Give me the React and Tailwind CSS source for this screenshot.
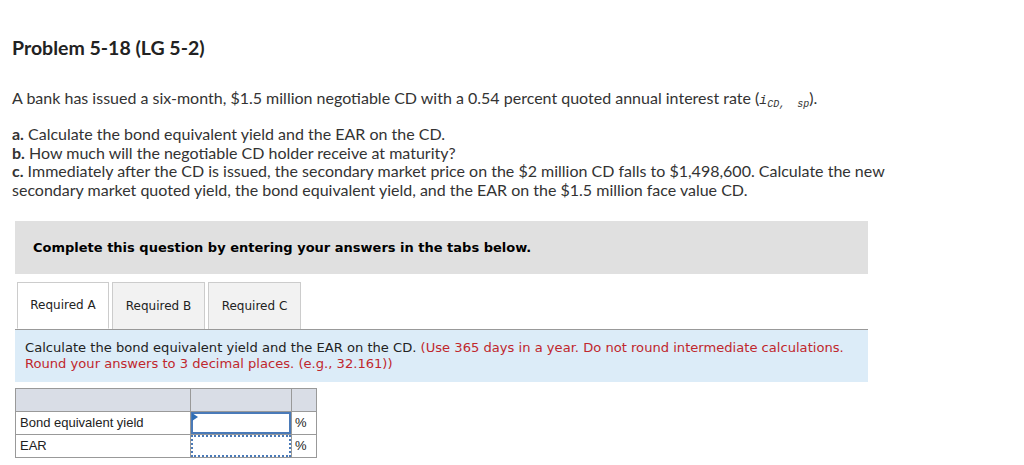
export default function App() {
  const proxima = { fontFamily: "Lato, 'Open Sans', sans-serif" };
  return (
    <div className="w-[1024px] h-[465px] bg-white overflow-hidden text-[#333]" style={proxima}>
      <div className="pl-[12px] pt-[36px]">
        <h1 className="text-[19.5px] font-bold text-[#222] leading-[24px]">Problem 5-18 (LG 5-2)</h1>
        <p className="mt-[28px] text-[16px] leading-[20px]">
          A bank has issued a six-month, $1.5 million negotiable CD with a 0.54 percent quoted annual interest rate (
          <span className="italic text-[13px] font-['Liberation_Mono',monospace]">i<sub className="text-[10px]">CD,&nbsp; sp</sub></span>).
        </p>
        <div className="mt-[14px] text-[16px] leading-[18.7px]">
          <div><b>a.</b> Calculate the bond equivalent yield and the EAR on the CD.</div>
          <div><b>b.</b> How much will the negotiable CD holder receive at maturity?</div>
          <div><b>c.</b> Immediately after the CD is issued, the secondary market price on the $2 million CD falls to $1,498,600. Calculate the new</div>
          <div>secondary market quoted yield, the bond equivalent yield, and the EAR on the $1.5 million face value CD.</div>
        </div>
      </div>
      <div className="ml-[15px] w-[853px] font-['DejaVu_Sans',Verdana,sans-serif]">
        <div className="mt-[21px] h-[53px] bg-[#e0e0e0] flex items-center pl-[18px] text-[13px] font-bold text-black">
          Complete this question by entering your answers in the tabs below.
        </div>
        <div className="mt-[8px] flex gap-[3px] pl-[2px] border-b border-[#999]">
          <div className="w-[92px] h-[47px] -mb-px bg-white border border-[#ccc] border-b-white flex items-center justify-center text-[12px] text-[#222]">Required A</div>
          <div className="w-[93px] h-[47px] bg-[#f2f2f2] border border-[#ccc] border-b-0 flex items-center justify-center text-[12px] text-[#222]">Required B</div>
          <div className="w-[93px] h-[47px] bg-[#f2f2f2] border border-[#ccc] border-b-0 flex items-center justify-center text-[12px] text-[#222]">Required C</div>
        </div>
        <div className="h-[52px] bg-[#dcecf8] pl-[10px] pt-[10px] text-[13.1px] leading-[16px] text-[#222]">
          Calculate the bond equivalent yield and the EAR on the CD. <span className="text-[#c0272d]">(Use 365 days in a year. Do not round intermediate calculations. Round your answers to 3 decimal places. (e.g., 32.161))</span>
        </div>
      </div>
      <table className="ml-[15px] mt-[6px] border-collapse font-['Liberation_Sans',Arial,sans-serif] text-[13px] text-[#222]">
        <tbody>
          <tr className="bg-[#d9dde6] h-[23px]">
            <td className="w-[175px] border border-[#999]"></td>
            <td className="w-[101px] border border-[#999]"></td>
            <td className="w-[25px] border border-[#999]"></td>
          </tr>
          <tr className="h-[23px]">
            <td className="border border-[#999] pl-[4px]">Bond equivalent yield</td>
            <td className="border border-[#999] p-0 relative">
              <div className="absolute inset-0 border-2 border-[#4a7ab8] bg-white"></div>
              <div className="absolute left-[1px] top-[1px] w-0 h-0 border-t-[4px] border-b-[4px] border-l-[6px] border-t-transparent border-b-transparent border-l-[#2f6eb5]"></div>
            </td>
            <td className="border border-[#999] pl-[3px]">%</td>
          </tr>
          <tr className="h-[23px]">
            <td className="border border-[#999] pl-[4px]">EAR</td>
            <td className="border border-[#999] p-0 relative">
              <div className="absolute inset-0 border-2 border-dotted border-[#4a7ab8]"></div>
            </td>
            <td className="border border-[#999] pl-[3px]">%</td>
          </tr>
        </tbody>
      </table>
    </div>
  );
}
